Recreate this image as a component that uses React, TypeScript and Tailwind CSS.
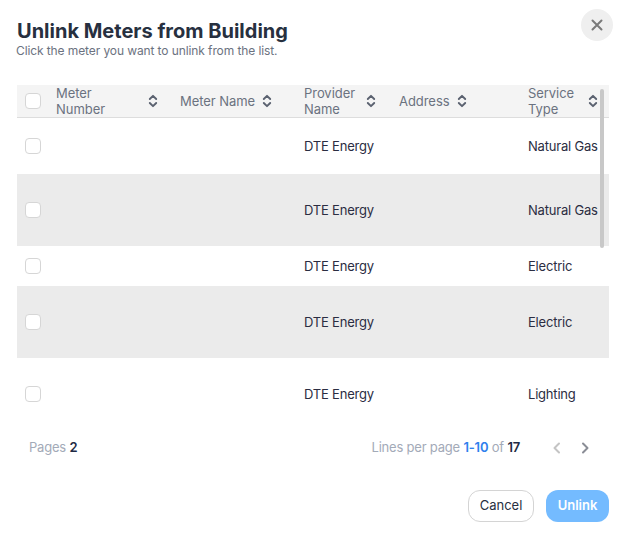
const font = { fontFamily: "Inter, 'Noto Sans', sans-serif" };

function Sort() {
  return (
    <svg width="10" height="14" viewBox="0 0 10 14" fill="none" stroke="#5b6270" strokeWidth="1.9" strokeLinecap="round" strokeLinejoin="round">
      <path d="M1.8 5 5 1.8 8.2 5" />
      <path d="M1.8 9 5 12.2 8.2 9" />
    </svg>
  );
}

function Box() {
  return <span className="block w-4 h-4 rounded-[4px] border border-[#d6d6d6] bg-white" />;
}

const cols = "grid grid-cols-[39px_124px_124px_95px_129px_81px]";

function Row({ h, provider, service, shade }: { h: string; provider: string; service: string; shade?: boolean }) {
  return (
    <div className={`${cols} items-center ${h} ${shade ? "bg-[#ebebeb]" : "bg-white"} text-[13px] font-normal text-[#2b2d42] tracking-[-0.2px]`}>
      <div className="pl-2"><Box /></div>
      <div />
      <div />
      <div className="whitespace-nowrap pt-[2px]">{provider}</div>
      <div />
      <div className="whitespace-nowrap pt-[2px]">{service}</div>
    </div>
  );
}

function Rows() {
  return (
    <div>
      <Row h="h-[56px]" provider="DTE Energy" service="Natural Gas" />
      <Row h="h-[72px]" provider="DTE Energy" service="Natural Gas" shade />
      <Row h="h-[40px]" provider="DTE Energy" service="Electric" />
      <Row h="h-[72px]" provider="DTE Energy" service="Electric" shade />
      <Row h="h-[72px]" provider="DTE Energy" service="Lighting" />
    </div>
  );
}

export default function App() {
  return (
    <div className="relative w-[626px] h-[540px] bg-white px-[17px] pt-[21px] overflow-hidden" style={font}>
      <button className="absolute right-[13px] top-[9px] w-8 h-8 rounded-full bg-[#efefef] flex items-center justify-center">
        <svg width="12" height="12" viewBox="0 0 12 12" fill="none" stroke="#7a7a7a" strokeWidth="2" strokeLinecap="round">
          <path d="M1.5 1.5l9 9M10.5 1.5l-9 9" />
        </svg>
      </button>

      <h1 className="text-[20px] leading-[20px] font-bold text-[#27303f]">Unlink Meters from Building</h1>
      <p className="text-[12px] leading-[14px] mt-[3px] -ml-px text-[#6b7280] tracking-[-0.1px]">Click the meter you want to unlink from the list.</p>

      <div className="relative mt-[27px] w-[592px]">
        <div className={`${cols} items-center h-[33px] bg-[#f4f4f4] border-b border-[#dddddd] text-[13px] leading-[16px] text-[#6b7280] tracking-[-0.05px]`}>
          <div className="pl-2"><Box /></div>
          <div className="flex items-center"><span className="w-[92px]">Meter<br />Number</span><Sort /></div>
          <div className="flex items-center gap-[7px]"><span className="whitespace-nowrap">Meter Name</span><Sort /></div>
          <div className="flex items-center"><span className="w-[62px]">Provider<br />Name</span><Sort /></div>
          <div className="flex items-center gap-[7px]"><span>Address</span><Sort /></div>
          <div className="flex items-center"><span className="w-[60px]">Service<br />Type</span><Sort /></div>
        </div>
        <Rows />
        <div className="absolute left-[583px] top-[4px] w-1 h-[159px] rounded-full bg-[#c8c8c8]" />
      </div>

      <div className="flex items-center mt-[8px] h-[20px] text-[13px] text-[#a3aab8] tracking-[-0.2px]">
        <div className="pl-3">Pages <span className="font-semibold text-[#1f2a44]">2</span></div>
        <div className="ml-auto flex items-center">
          <span>Lines per page <span className="font-semibold text-[#2f80ed]">1-10</span> of <span className="font-semibold text-[#1f2a44]">17</span></span>
          <svg width="10" height="12" viewBox="0 0 10 12" fill="none" stroke="#c4c4c4" strokeWidth="2" strokeLinecap="round" strokeLinejoin="round" className="ml-[32px]"><path d="M7 1.5 2.5 6 7 10.5" /></svg>
          <svg width="10" height="12" viewBox="0 0 10 12" fill="none" stroke="#8a8d96" strokeWidth="2" strokeLinecap="round" strokeLinejoin="round" className="ml-[18px] mr-[19px]"><path d="M3 1.5 7.5 6 3 10.5" /></svg>
        </div>
      </div>

      <div className="flex justify-end gap-3 mt-[32px] w-[592px]">
        <button className="w-[66px] h-8 rounded-[12px] border border-[#d4d4d4] bg-white text-[13px] font-normal text-[#27303f]">Cancel</button>
        <button className="w-[63px] h-8 rounded-[12px] bg-[#74bbff] text-[13px] font-semibold text-white">Unlink</button>
      </div>
    </div>
  );
}
